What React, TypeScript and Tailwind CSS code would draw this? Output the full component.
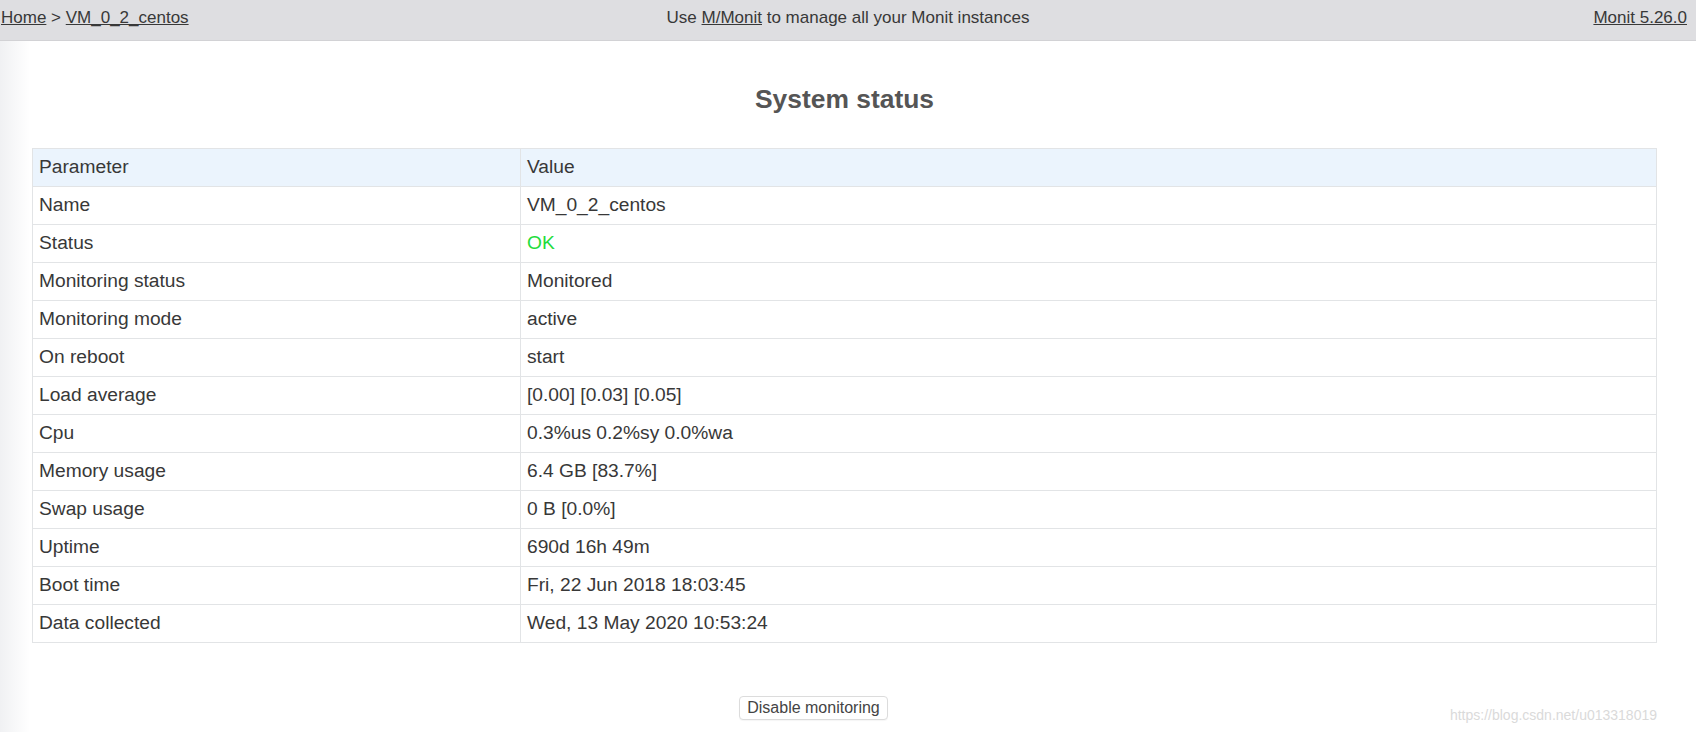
import React from "react";

interface Row {
  param: string;
  value: string;
  ok?: boolean;
}

const rows: Row[] = [
  { param: "Name", value: "VM_0_2_centos" },
  { param: "Status", value: "OK", ok: true },
  { param: "Monitoring status", value: "Monitored" },
  { param: "Monitoring mode", value: "active" },
  { param: "On reboot", value: "start" },
  { param: "Load average", value: "[0.00] [0.03] [0.05]" },
  { param: "Cpu", value: "0.3%us 0.2%sy 0.0%wa" },
  { param: "Memory usage", value: "6.4 GB [83.7%]" },
  { param: "Swap usage", value: "0 B [0.0%]" },
  { param: "Uptime", value: "690d 16h 49m" },
  { param: "Boot time", value: "Fri, 22 Jun 2018 18:03:45" },
  { param: "Data collected", value: "Wed, 13 May 2020 10:53:24" },
];

export default function App() {
  return (
    <div className="relative h-[732px] w-full overflow-hidden bg-white font-['Liberation_Sans','Helvetica',Arial,sans-serif] text-[#383838]">
      {/* top bar */}
      <div className="grid h-[41px] grid-cols-3 items-start border-b border-[#d2d2d5] bg-[#dedee1] pt-[8px] text-[17px] leading-[20px]">
        <div className="pl-[1px]">
          <a href="#" className="underline">Home</a>
          <span> &gt; </span>
          <a href="#" className="underline">VM_0_2_centos</a>
        </div>
        <div className="text-center">
          Use <a href="#" className="underline">M/Monit</a> to manage all your Monit instances
        </div>
        <div className="pr-[9px] text-right">
          <a href="#" className="underline">Monit 5.26.0</a>
        </div>
      </div>

      {/* content */}
      <div className="h-[691px] bg-[linear-gradient(to_right,#f0f1f3,#ffffff_30px)] pl-[32px] pr-[39px] pt-[43px]">
        <h1 className="text-center text-[26.4px] font-bold leading-[30px] text-[#555]">System status</h1>

        <table className="mt-[34px] w-full border-collapse border border-[#e2e4e6] bg-white text-[19.2px]">
          <thead>
            <tr className="bg-[#ebf4fd]">
              <th className="h-[38px] w-[488px] border border-[#e2e4e6] pl-[6px] text-left font-normal">Parameter</th>
              <th className="h-[38px] border border-[#e2e4e6] pl-[6px] text-left font-normal">Value</th>
            </tr>
          </thead>
          <tbody>
            {rows.map((r) => (
              <tr key={r.param}>
                <td className="h-[38px] border border-[#e2e4e6] pl-[6px]">{r.param}</td>
                <td className={`h-[38px] border border-[#e2e4e6] pl-[6px] ${r.ok ? "text-[#22dc3c]" : ""}`}>
                  {r.value}
                </td>
              </tr>
            ))}
          </tbody>
        </table>

        <div className="mt-[53px] flex justify-center">
          <button className="mr-[62px] h-[24px] rounded-[4px] border border-[#dcdcdc] bg-white px-[7px] text-[16px] leading-[20px] text-[#444] shadow-[0_1px_1px_rgba(0,0,0,0.04)]">
            Disable monitoring
          </button>
        </div>
      </div>

      {/* watermark */}
      <div className="pointer-events-none absolute right-[39px] top-[706px] text-[14px] leading-[18px] text-[#dadada]">
        https://blog.csdn.net/u013318019
      </div>
    </div>
  );
}
